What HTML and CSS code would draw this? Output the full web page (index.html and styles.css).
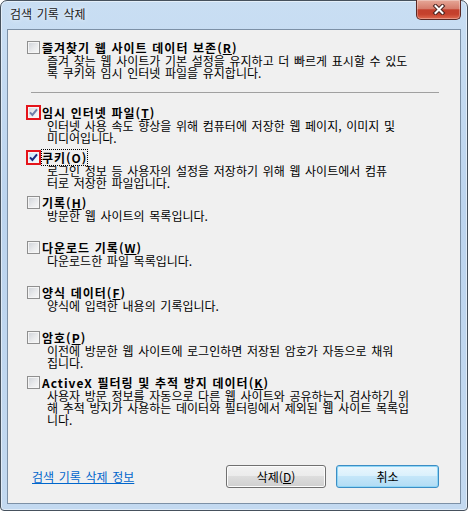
FILE: index.html
```html
<!DOCTYPE html>
<html lang="ko">
<head>
    <meta charset="UTF-8">
    <meta name="viewport" content="width=device-width, initial-scale=1.0">
    <title>검색 기록 삭제</title>
    <link rel="stylesheet" href="styles.css">
</head>
<body>
    <div class="window">
        <div class="titlebar">
            <span class="title">검색 기록 삭제</span>
            <div class="close-btn">
                <svg width="14" height="11" viewBox="0 0 14 11">
                    <path d="M3.5 2 L10.5 9 M10.5 2 L3.5 9" stroke="#4a2420" stroke-width="4" stroke-linecap="square"/>
                    <path d="M3.5 2 L10.5 9 M10.5 2 L3.5 9" stroke="#ffffff" stroke-width="2" stroke-linecap="square"/>
                </svg>
            </div>
        </div>

        <div class="client">
            <div class="options">
                <div class="option first">
                    <div class="option-head">
                        <span class="checkbox"></span>
                        <span class="option-label">즐겨찾기 웹 사이트 데이터 보존(<u>R</u>)</span>
                    </div>
                    <div class="option-desc">즐겨 찾는 웹 사이트가 기본 설정을 유지하고 더 빠르게 표시할 수 있도<br>록 쿠키와 임시 인터넷 파일을 유지합니다.</div>
                </div>

                <div class="separator"></div>

                <div class="option">
                    <div class="option-head">
                        <span class="checkbox checked dim marked">
                            <svg width="11" height="11" viewBox="0 0 11 11"><path d="M2 5.4 L4.4 8 L9 2.4" fill="none" stroke="#6f7fa8" stroke-width="2"/></svg>
                        </span>
                        <span class="option-label">임시 인터넷 파일(<u>T</u>)</span>
                    </div>
                    <div class="option-desc">인터넷 사용 속도 향상을 위해 컴퓨터에 저장한 웹 페이지, 이미지 및<br>미디어입니다.</div>
                </div>

                <div class="option">
                    <div class="option-head">
                        <span class="checkbox checked marked">
                            <svg width="11" height="11" viewBox="0 0 11 11"><path d="M2 5.4 L4.4 8 L9 2.4" fill="none" stroke="#1a2a7e" stroke-width="2"/></svg>
                        </span>
                        <span class="option-label focus">쿠키(O)</span>
                    </div>
                    <div class="option-desc">로그인 정보 등 사용자의 설정을 저장하기 위해 웹 사이트에서 컴퓨<br>터로 저장한 파일입니다.</div>
                </div>

                <div class="option">
                    <div class="option-head">
                        <span class="checkbox"></span>
                        <span class="option-label">기록(<u>H</u>)</span>
                    </div>
                    <div class="option-desc">방문한 웹 사이트의 목록입니다.</div>
                </div>

                <div class="option">
                    <div class="option-head">
                        <span class="checkbox"></span>
                        <span class="option-label">다운로드 기록(<u>W</u>)</span>
                    </div>
                    <div class="option-desc">다운로드한 파일 목록입니다.</div>
                </div>

                <div class="option">
                    <div class="option-head">
                        <span class="checkbox"></span>
                        <span class="option-label">양식 데이터(<u>F</u>)</span>
                    </div>
                    <div class="option-desc">양식에 입력한 내용의 기록입니다.</div>
                </div>

                <div class="option">
                    <div class="option-head">
                        <span class="checkbox"></span>
                        <span class="option-label">암호(<u>P</u>)</span>
                    </div>
                    <div class="option-desc">이전에 방문한 웹 사이트에 로그인하면 저장된 암호가 자동으로 채워<br>집니다.</div>
                </div>

                <div class="option">
                    <div class="option-head">
                        <span class="checkbox"></span>
                        <span class="option-label">ActiveX 필터링 및 추적 방지 데이터(<u>K</u>)</span>
                    </div>
                    <div class="option-desc">사용자 방문 정보를 자동으로 다른 웹 사이트와 공유하는지 검사하기 위<br>해 추적 방지가 사용하는 데이터와 필터링에서 제외된 웹 사이트 목록입<br>니다.</div>
                </div>
            </div>

            <div class="footer">
                <a href="#" class="info-link">검색 기록 삭제 정보</a>
                <div class="buttons">
                    <button type="button" class="btn">삭제(<u>D</u>)</button>
                    <button type="button" class="btn default">취소</button>
                </div>
            </div>
        </div>
    </div>
</body>
</html>
```

FILE: styles.css
```css
body {
    margin: 0;
    font-family: "Noto Sans CJK KR", "Noto Sans", sans-serif;
    font-size: 12px;
    color: #000;
    word-spacing: 1.3px;
}

.window {
    width: 468px;
    height: 511px;
    box-sizing: border-box;
    border: 1px solid #46515d;
    border-radius: 7px 7px 4px 4px;
    background: linear-gradient(to bottom, #c9def3 0%, #bcd4ee 40%, #c3d9f0 100%);
    box-shadow: inset 0 0 0 1px rgba(255, 255, 255, 0.5);
    padding: 0 6px 6px;
    display: flex;
    flex-direction: column;
}

.titlebar {
    height: 28px;
    display: flex;
    align-items: flex-start;
}

.title {
    padding: 5px 0 0 3px;
    line-height: 16px;
    color: #1a1a1a;
    text-shadow: 0 0 5px #fff;
}

.close-btn {
    margin-left: auto;
    margin-top: -1px;
    width: 45px;
    height: 20px;
    box-sizing: border-box;
    border: 1px solid #5b2824;
    border-top: none;
    border-radius: 0 0 5px 5px;
    background: linear-gradient(to bottom, #e6a898 0%, #d67d6c 45%, #c3402d 52%, #c5412d 75%, #df6a50 100%);
    box-shadow: inset 0 0 0 1px rgba(255, 255, 255, 0.3);
    display: flex;
    align-items: center;
    justify-content: center;
}

.client {
    flex: 1;
    background: #f0f0f0;
    border: 1px solid #7c90a6;
    display: flex;
    flex-direction: column;
}

.options {
    padding: 10px 0 0 19px;
}

.option {
    margin-bottom: 6px;
}

.option.first {
    margin-bottom: 0;
}

.option-head {
    height: 15px;
    display: flex;
    align-items: center;
}

.option-label {
    margin-left: 2px;
    font-weight: bold;
    line-height: 15px;
    letter-spacing: 1px;
    word-spacing: 0.3px;
    white-space: nowrap;
}

.option-label.focus {
    display: inline-block;
    height: 15px;
    outline: 1px dotted #000;
}

.option-desc {
    padding-left: 20px;
    min-height: 24px;
    line-height: 12px;
    white-space: nowrap;
}

.separator {
    width: 408px;
    margin: 13px 0 12px 4px;
    border-top: 1px solid #a0a0a0;
}

.checkbox {
    width: 13px;
    height: 13px;
    box-sizing: border-box;
    flex-shrink: 0;
    border: 1px solid #8f8f8f;
    background: linear-gradient(135deg, #cdd1d7 0%, #e9eaec 55%, #f8f8f8 100%);
    box-shadow: inset 0 0 0 1px #f5f5f5;
    display: flex;
}

.checkbox.checked {
    background: linear-gradient(135deg, #c3e2f8 0%, #e4f2fc 55%, #f6fbfe 100%);
}

.checkbox.dim {
    background: linear-gradient(135deg, #d3d6dc 0%, #eceef1 55%, #f8f8f8 100%);
}

.checkbox.marked {
    outline: 2px solid #e5141b;
    outline-offset: -1px;
}

.footer {
    margin-top: auto;
    padding: 0 21px 15px 24px;
    display: flex;
    align-items: center;
}

.info-link {
    color: #0066cc;
    text-decoration: underline;
}

.buttons {
    margin-left: auto;
    display: flex;
}

.btn {
    width: 100px;
    height: 23px;
    box-sizing: border-box;
    padding: 0;
    font-family: inherit;
    font-size: 12px;
    word-spacing: inherit;
    color: #000;
    border: 1px solid #707070;
    border-radius: 3px;
    background: linear-gradient(to bottom, #f2f2f2 0%, #ebebeb 49%, #dddddd 50%, #cfcfcf 100%);
    box-shadow: inset 0 0 0 1px #fcfcfc;
}

.btn + .btn {
    margin-left: 10px;
}

.btn.default {
    width: 103px;
    border-color: #3c8dc4;
    background: linear-gradient(to bottom, #eaf6fd 0%, #d9f0fc 49%, #c4e6f9 50%, #b2dcf4 100%);
    box-shadow: inset 0 0 0 1px #8fd6f6;
}
```
